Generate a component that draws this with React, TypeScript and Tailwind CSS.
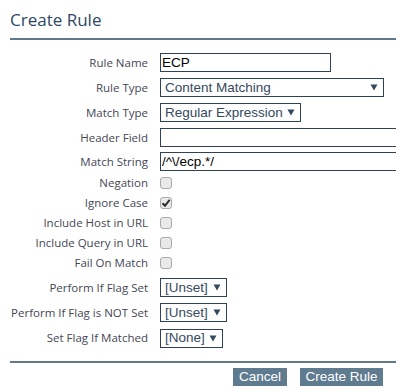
import React from "react";

const labelCls =
  "w-[148px] shrink-0 text-right text-[11.5px] text-[#454756] pr-0 leading-none";
const ctrlFont = { fontFamily: '"Liberation Sans", Arial, sans-serif' };

function Label({ children }: { children: React.ReactNode }) {
  return (
    <div className={labelCls} style={{ fontFamily: '"Open Sans", "Noto Sans", sans-serif' }}>
      {children}
    </div>
  );
}

function InputRow({ label, value, w }: { label: string; value: string; w: string }) {
  return (
    <div className="flex h-[25px] items-center">
      <Label>{label}</Label>
      <div
        className={`ml-[12px] h-[19px] ${w} shrink-0 border border-[#2f4356] bg-white pl-[1px] text-[13.5px] leading-[17px] text-black`}
        style={ctrlFont}
      >
        {value}
      </div>
    </div>
  );
}

function SelectRow({ label, value, w, h = "h-[25px]" }: { label: string; value: string; w: string; h?: string }) {
  return (
    <div className={`flex ${h} items-center`}>
      <Label>{label}</Label>
      <div
        className={`ml-[12px] flex h-[19px] ${w} shrink-0 items-center justify-between border border-[#2f4356] bg-white pl-[4px] pr-[5px] text-[13.5px] text-[#34495e]`}
        style={ctrlFont}
      >
        <span className="leading-none">{value}</span>
        <svg width="8" height="7" viewBox="0 0 8 7">
          <path d="M0.5 0.5 H7.5 L4 6.5 Z" fill="#34495e" />
        </svg>
      </div>
    </div>
  );
}

function CheckRow({ label, checked = false }: { label: string; checked?: boolean }) {
  return (
    <div className="flex h-[20px] items-center">
      <Label>{label}</Label>
      <div className="ml-[12px] flex h-[12px] w-[12px] items-center justify-center rounded-[3px] border border-[#a9a9a9] bg-[#e9e9e9]">
        {checked && (
          <svg width="10" height="10" viewBox="0 0 10 10">
            <path d="M1.5 5.2 L4 7.8 L8.6 1.8" fill="none" stroke="#2b2b2b" strokeWidth="2" />
          </svg>
        )}
      </div>
    </div>
  );
}

export default function App() {
  return (
    <div className="h-[392px] w-[396px] overflow-hidden bg-white">
      <div className="pl-[10px]">
        <div
          className="h-[24px] pt-[0px] mt-[8px] text-[17px] leading-[24px] text-[#2d4866]"
          style={{ fontFamily: '"Open Sans", "Noto Sans", sans-serif' }}
        >
          Create Rule
        </div>
        <div className="mt-[6px] h-[2px] w-[386px] bg-[#62798b]" />
      </div>
      <div className="mt-[10px] flex flex-col">
        <InputRow label="Rule Name" value="ECP" w="w-[171px]" />
        <SelectRow label="Rule Type" value="Content Matching" w="w-[224px]" />
        <SelectRow label="Match Type" value="Regular Expression" w="w-[141px]" />
        <InputRow label="Header Field" value="" w="w-[300px]" />
        <div className="h-[23px] flex items-center">
          <Label>Match String</Label>
          <div
            className="ml-[12px] h-[19px] w-[300px] shrink-0 border border-[#2f4356] bg-white pl-[1px] text-[13.5px] leading-[17px] text-black"
            style={ctrlFont}
          >
            /^\/ecp.*/
          </div>
        </div>
        <CheckRow label="Negation" />
        <CheckRow label="Ignore Case" checked />
        <CheckRow label="Include Host in URL" />
        <CheckRow label="Include Query in URL" />
        <CheckRow label="Fail On Match" />
        <div className="h-[2px]" />
        <SelectRow label="Perform If Flag Set" value="[Unset]" w="w-[67px]" />
        <SelectRow label="Perform If Flag is NOT Set" value="[Unset]" w="w-[67px]" />
        <SelectRow label="Set Flag If Matched" value="[None]" w="w-[63px]" h="h-[26px]" />
      </div>
      <div className="pl-[10px]">
        <div className="mt-[10px] h-[2px] w-[386px] bg-[#62798b]" />
      </div>
      <div className="mt-[5px] flex justify-end gap-[13px] pr-[13px]">
        <div
          className="flex h-[18px] w-[54px] items-center justify-center bg-[#5f7b90] text-[13.5px] text-white"
          style={ctrlFont}
        >
          Cancel
        </div>
        <div
          className="flex h-[18px] w-[83px] items-center justify-center bg-[#5f7b90] text-[13.5px] text-white"
          style={ctrlFont}
        >
          Create Rule
        </div>
      </div>
    </div>
  );
}
